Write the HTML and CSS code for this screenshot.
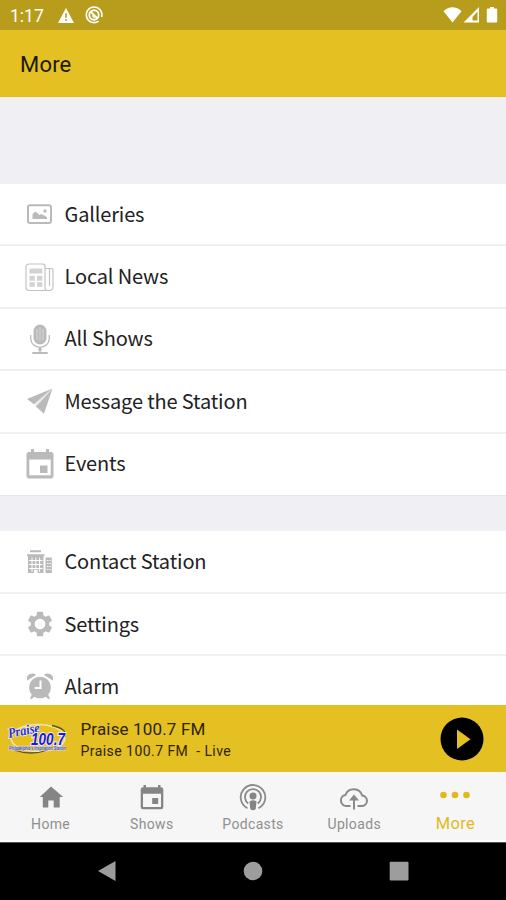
FILE: index.html
```html
<!DOCTYPE html>
<html lang="en">
<head>
    <meta charset="UTF-8">
    <meta name="viewport" content="width=device-width, initial-scale=1.0">
    <title>More - Praise 100.7 FM</title>
    <link rel="stylesheet" href="styles.css">
</head>
<body>
    <div class="status-bar">
        <span class="clock">1:17</span>
        <svg class="warn" width="16" height="15" viewBox="0 0 16 15"><path fill="#fff" d="M8 0l8 15H0z"/><path fill="#b89c1c" d="M7.2 5.2h1.6v4.6H7.2zM7.2 11h1.6v1.7H7.2z"/></svg>
        <svg class="sync" width="18" height="18" viewBox="0 0 18 18" fill="none" stroke="#fff"><path stroke-width="1.6" d="M13.6 15.2A7.8 7.8 0 1 1 16.6 11"/><circle cx="9" cy="9" r="4.7" stroke-width="1.9"/><path stroke-width="2" d="M6 6l6.500 6.500"/><path stroke-width="1.300" d="M7.300 9.500l2.200 2.200"/></svg>
        <svg class="signals" width="56" height="18" viewBox="0 0 56 18">
            <path fill="#fff" d="M.5 5.300C5.500-.1 13.500-.1 18.500 5.300L9.500 16.500z"/>
            <path fill="#fff" fill-rule="evenodd" d="M36 1v15.500H20.500zM34.500 5.500L29.500 11v3.500h5z"/>
            <path fill="#fff" d="M47 1h4v1.500h2.200q1 0 1 1v12q0 1-1 1h-8.400q-1 0-1-1v-12q0-1 1-1H47z"/>
        </svg>
    </div>
    <header>
        <h1>More</h1>
    </header>

    <main>
        <ul class="menu">
            <li>
                <svg class="icon" viewBox="0 0 30 30"><rect x="3" y="6.300" width="23" height="17.600" rx="2" fill="none" stroke="#bababa" stroke-width="2"/><path d="M7.500 20v-5l3-2.500 4 3.500 2-1 5.500 3v2z"/><circle cx="20" cy="12" r="1.700"/></svg>
                Galleries
            </li>
            <li>
                <svg class="icon" viewBox="0 0 30 30"><g fill="none" stroke="#c3c3c3" stroke-width="1.200"><path d="M20 25.500V4.500q0-2.500-2.500-2.500h-13Q1 2 1 4.500v21q0 3 3 3h20q4 0 4-3.500V8.500q0-2-2-2h-6M20 25.500q0 3 2 3M24.500 6.500V24"/></g><path fill="#d2d2d2" d="M4.500 6.500h12.800v5H4.500zM4.500 13.800h5.300v5H4.500zM4.500 20.300h5.300v4.500H4.500zM12 13.800h5.300v5H12zM12 20.300h5.300v4.500H12z"/></svg>
                Local News
            </li>
            <li>
                <svg class="icon" viewBox="0 0 30 30"><rect x="8.500" y=".5" width="13" height="20" rx="6.500"/><path stroke="#e1e1e1" d="M12 5v11M15 3v14M18 5v11" stroke-width=".8"/><path fill="none" stroke="#bababa" stroke-width="1.300" d="M5.700 11v3.500a9.300 8.800 0 0 0 18.600 0V11M15 23.300v5"/><circle cx="15" cy="25.500" r="1.700"/><path d="M7.300 28h15.400v2H7.300z"/></svg>
                All Shows
            </li>
            <li>
                <svg class="icon" viewBox="0 0 30 30"><path d="M27.500 2.500L2 13l7 5.200z"/><path d="M27.500 2.500L19 27.700 10.500 20.300z"/><path d="M9.500 18l2.300 2L27.500 2.500z" fill="#e8e8e8"/></svg>
                Message the Station
            </li>
            <li>
                <svg class="icon" viewBox="0 0 30 30"><path fill-rule="evenodd" d="M6 0h3v3h12V0h3v3h2q2.500 0 2.500 2.500v21Q28.500 29.500 26 29.500H4q-2.500 0-2.500-3v-21Q1.500 3 4 3h2zM4.300 10.500v15.800h21.400V10.500z"/><path d="M15 16.500h7.500V24H15z"/></svg>
                Events
            </li>
        </ul>
        <ul class="menu">
            <li>
                <svg class="icon" viewBox="0 0 30 30"><path d="M5 3.200h11v2H5zM2 7.200h17.500v2H2zM3 9h15.500v17H3z"/><path stroke="#fff" stroke-width="1" d="M7 10.500V25M10.800 10.500V22M14.600 10.500V25M4 13.500h13.500M4 17.500h13.500M4 21.500h13.500"/><path fill="#fff" d="M9 22.700h3.600V26H9z"/><path d="M20.500 10.500h6.300V26h-6.300z"/><path stroke="#fff" stroke-dasharray="1.500 1" d="M22 13.500h3.800M22 16.500h3.800M22 19.500h3.800M22 22.500h3.800"/></svg>
                Contact Station
            </li>
            <li>
                <svg class="icon gear" viewBox="0 0 24 24"><path d="M19.140 12.940c.04-.3.060-.61.060-.94s-.02-.64-.07-.94l2.030-1.580a.49.490 0 0 0 .12-.61l-1.920-3.320a.49.490 0 0 0-.59-.22l-2.390.96a7 7 0 0 0-1.620-.94l-.36-2.540a.48.480 0 0 0-.48-.41h-3.840a.47.470 0 0 0-.47.410l-.36 2.540c-.59.240-1.130.570-1.620.940l-2.390-.96a.47.470 0 0 0-.59.220L2.740 8.870a.48.480 0 0 0 .12.610l2.030 1.580a6 6 0 0 0 0 1.880l-2.030 1.580a.49.490 0 0 0-.12.610l1.920 3.320c.12.220.37.290.59.220l2.390-.96c.5.380 1.030.70 1.620.94l.36 2.540c.05.240.24.410.48.410h3.840c.24 0 .44-.17.470-.41l.36-2.540a7 7 0 0 0 1.620-.94l2.390.96c.22.080.47 0 .59-.22l1.920-3.320a.47.470 0 0 0-.12-.61zM12 16.200a4.200 4.200 0 1 1 0-8.400 4.200 4.200 0 0 1 0 8.400z"/></svg>
                Settings
            </li>
            <li>
                <svg class="icon" viewBox="0 0 30 30"><circle cx="15" cy="16.500" r="10.800"/><path d="M2.300 9.500C0 4 7 .5 11 4zM27.700 9.500C30 4 23 .5 19 4zM7 23l2.500 2-2.500 3H5zM23 23l-2.500 2 2.500 3h2z"/><path fill="none" stroke="#fff" stroke-width="2" d="M15.500 9.500V17H9.800"/></svg>
                Alarm
            </li>
        </ul>
    </main>

    <div class="player">
        <svg class="logo" width="64" height="42" viewBox="0 0 64 42">
            <ellipse cx="32" cy="20" rx="27" ry="13.500" fill="#e8c01e" stroke="#f2e6a0" stroke-width="1.500"/>
            <path fill="none" stroke="#5b5520" stroke-width="1.300" d="M46 7.500Q62 11 59 19M8 32Q25 38 42 32"/>
            <text class="logo-name" x="3" y="20" transform="rotate(-11 3 20)" textLength="32" lengthAdjust="spacingAndGlyphs">Praise</text>
            <text class="logo-freq" x="25" y="26.500" textLength="34" lengthAdjust="spacingAndGlyphs">100.7</text>
            <text class="logo-tag" x="3" y="32" textLength="57" lengthAdjust="spacingAndGlyphs">Philadelphia's Inspiration Station</text>
        </svg>
        <div class="track">
            <div class="track-title">Praise 100.7 FM</div>
            <div class="track-sub">Praise 100.7 FM&nbsp; - Live</div>
        </div>
        <svg class="play" width="44" height="44" viewBox="0 0 44 44"><circle cx="22" cy="22" r="21.500"/><path fill="#e4c023" d="M17 12.500v19.500L30.500 22.200z"/></svg>
    </div>

    <nav class="tabs">
        <a class="tab">
            <svg viewBox="0 0 30 30"><path d="M12.300 25.500v-7h5.400v7h6V15h3.500L15 4.500 3.800 15h3v10.500z"/></svg>
            Home
        </a>
        <a class="tab">
            <svg viewBox="0 0 30 30"><path fill-rule="evenodd" d="M6.500 3H9v2.200h12V3h2.500v2.200H24q2.300 0 2.300 2.300v17.500q0 2.300-2.300 2.300H6q-2.300 0-2.300-2.300V7.500Q3.700 5.200 6 5.200h.5zM6 11.700V25h18V11.700z"/><path d="M15.200 16h6v6h-6z"/></svg>
            Shows
        </a>
        <a class="tab">
            <svg viewBox="0 0 30 30"><g fill="none" stroke="#8a8a8a" stroke-width="1.800"><path d="M9.500 26.300A12.300 12.300 0 1 1 20.500 26.300"/><path d="M10.300 21.500A8 8 0 1 1 19.700 21.500"/></g><circle cx="15" cy="14" r="3.500"/><path d="M11.500 19.500q3.500-2.500 7 0L17.700 27q-2.700 2.500-5.400 0z"/></svg>
            Podcasts
        </a>
        <a class="tab">
            <svg class="outline" viewBox="0 0 30 30"><path d="M11.500 24H7.300a5.600 5.600 0 0 1-.8-11.100A8.800 8.800 0 0 1 23.200 13.500 5.300 5.300 0 0 1 23.500 24h-5M15 27.500V15.500"/><path fill="#8a8a8a" stroke="none" d="M15 12.500l5 6H10z"/></svg>
            Uploads
        </a>
        <a class="tab active">
            <svg viewBox="0 0 30 30"><circle cx="3.500" cy="13" r="3.300"/><circle cx="15" cy="13" r="3.300"/><circle cx="26.500" cy="13" r="3.300"/></svg>
            More
        </a>
    </nav>

    <div class="system-nav">
        <svg width="20" height="22" viewBox="0 0 20 22"><path d="M18.500 1v20L1 11z"/></svg>
        <svg width="20" height="22" viewBox="0 0 20 22"><circle cx="10" cy="11" r="9.300"/></svg>
        <svg width="20" height="22" viewBox="0 0 20 22"><rect x=".7" y="1.700" width="18.800" height="18.800" rx="1"/></svg>
    </div>
</body>
</html>
```

FILE: styles.css
```css
* {
    margin: 0;
    padding: 0;
    box-sizing: border-box;
}
body {
    display: flex;
    flex-direction: column;
    height: 900px;
    overflow: hidden;
    background: #efeff4;
    font-family: Roboto, sans-serif;
    color: #222;
}
.status-bar {
    display: flex;
    align-items: center;
    height: 30px;
    flex: none;
    padding: 0 7px 0 10px;
    background: #b89c1c;
    color: #fff;
}
.clock {
    width: 48px;
    font-size: 17.5px;
    padding-top: 2px;
}
.sync {
    margin-left: 11px;
}
.signals {
    margin-left: auto;
}
header {
    display: flex;
    align-items: center;
    height: 67px;
    flex: none;
    padding: 3px 20px 0;
    background: #e4c023;
    border-bottom: 1px solid #dfbd1b;
}
h1 {
    font-size: 22px;
    font-weight: 400;
    letter-spacing: 0.2px;
    color: #1d1900;
}
main {
    flex: 1;
    min-height: 0;
    overflow: hidden;
    padding-top: 87px;
}
.menu {
    list-style: none;
    margin-bottom: 35.5px;
}
.menu li {
    display: flex;
    align-items: center;
    gap: 10px;
    height: 62.4px;
    padding: 0 0 2px 24.5px;
    background: #fff;
    border-bottom: 2px solid #f0f0f2;
    font-family: "Noto Sans CJK SC", sans-serif;
    font-size: 20px;
    letter-spacing: -0.15px;
}
.menu li:last-child {
    border-bottom: 1px solid #e6e6ea;
    padding-bottom: 3px;
}
.icon {
    width: 30px;
    height: 30px;
    margin-top: 2px;
    fill: #bababa;
}
.gear {
    transform: scale(1.02);
}
.player {
    display: flex;
    align-items: center;
    height: 67px;
    flex: none;
    padding: 0 22px 0 6px;
    background: #e4c023;
}
.logo-name {
    font: italic bold 14px "Liberation Serif", serif;
    fill: #2a32c8;
    stroke: #eee;
    stroke-width: 1.5px;
    paint-order: stroke;
}
.logo-freq {
    font: italic bold 16px "Liberation Sans", sans-serif;
    fill: #1717e0;
    stroke: #eee;
    stroke-width: 2px;
    paint-order: stroke;
}
.logo-tag {
    font: italic bold 4.5px "Liberation Sans", sans-serif;
    fill: #4b4bb0;
    stroke: #ddd;
    stroke-width: 1px;
    paint-order: stroke;
}
.track {
    margin-left: 10.5px;
    padding-top: 3px;
    color: #2c2500;
}
.track-title {
    font-size: 17px;
    line-height: 22px;
    letter-spacing: 0.15px;
}
.track-sub {
    font-size: 14px;
    line-height: 22px;
    letter-spacing: 0.45px;
}
.play {
    margin-left: auto;
}
.tabs {
    display: flex;
    height: 70px;
    flex: none;
    background: #f6f6f6;
    border-bottom: 2px solid #fff;
}
.tab {
    flex: 1;
    display: flex;
    flex-direction: column;
    align-items: center;
    padding-top: 10px;
    font-size: 14px;
    line-height: 25px;
    letter-spacing: 0.35px;
    color: #8f8f8f;
}
.tab svg {
    width: 30px;
    height: 30px;
    fill: #858585;
}
.tab .outline {
    fill: none;
    stroke: #8a8a8a;
    stroke-width: 2px;
}
.tab.active {
    font-size: 16.5px;
    line-height: 23px;
    color: #e2b91c;
}
.tab.active svg {
    fill: #e2b91c;
}
.system-nav {
    display: flex;
    justify-content: center;
    align-items: center;
    gap: 126px;
    height: 58px;
    flex: none;
    padding-bottom: 2px;
    background: #000;
    border-top: 1px solid #555;
}
.system-nav svg {
    fill: #9d9d9d;
}
```
